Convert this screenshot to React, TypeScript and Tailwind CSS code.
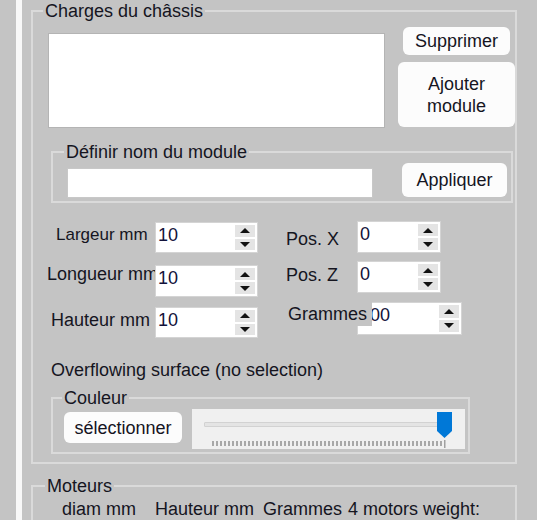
import React from "react";

function Tri({ up }: { up: boolean }) {
  return up ? (
    <div className="w-0 h-0 border-x-[5px] border-x-transparent border-b-[5px] border-b-[#111]" />
  ) : (
    <div className="w-0 h-0 border-x-[5px] border-x-transparent border-t-[5px] border-t-[#111]" />
  );
}

function NumBox({ value, className }: { value: string; className: string }) {
  return (
    <div className={`flex bg-white border border-[#d4d4d4] ${className}`}>
      <div className="flex-1 pl-[2px] pt-[1px] leading-[22px] text-[#12123a] overflow-hidden whitespace-nowrap">
        {value}
      </div>
      <div className="w-[24px] flex flex-col gap-[2px] p-[2px] bg-white">
        <div className="flex-1 bg-[#e4e4e4] flex items-center justify-center">
          <Tri up />
        </div>
        <div className="flex-1 bg-[#e4e4e4] flex items-center justify-center">
          <Tri up={false} />
        </div>
      </div>
    </div>
  );
}

function Btn({ children, className }: { children: React.ReactNode; className: string }) {
  return (
    <div
      className={`bg-[#fcfcfc] rounded-[6px] flex items-center justify-center text-center leading-[22px] ${className}`}
    >
      {children}
    </div>
  );
}

export default function App() {
  const ticks: number[] = [];
  for (let x = 0; x < 232; x += 4) ticks.push(x);
  return (
    <div className="w-[537px] h-[520px] overflow-hidden bg-[#c4c4c4] flex text-[18px] text-[#15151f] font-['Liberation_Sans',Arial,sans-serif]">
      <div className="w-[16px] shrink-0" />
      <div className="w-[6px] shrink-0 bg-[#f8f8f8]" />
      <div className="pl-[9px] flex flex-col">
        {/* Charges du châssis */}
        <fieldset className="w-[486px] border-2 border-[#dadada] pt-[5px] pb-[8px]">
          <legend className="ml-[10px] px-[2px] leading-[22px]">Charges du châssis</legend>
          <div className="flex items-start ml-[15px]">
            <div className="mt-[6px] w-[337px] h-[95px] bg-white border border-[#b4b4b4]" />
            <div className="ml-[13px] w-[117px] flex flex-col items-center gap-[7px]">
              <Btn className="w-[107px] h-[28px]">Supprimer</Btn>
              <Btn className="w-[117px] h-[65px]">
                Ajouter
                <br />
                module
              </Btn>
            </div>
          </div>

          {/* Définir nom du module */}
          <fieldset className="mt-[13px] ml-[18px] w-[462px] border-2 border-[#dadada] pb-[3px]">
            <legend className="ml-[11px] px-[2px] leading-[22px]">Définir nom du module</legend>
            <div className="flex items-start">
              <div className="ml-[14px] mt-[5px] w-[306px] h-[30px] bg-white border border-[#c8c8c8]" />
              <Btn className="ml-[29px] w-[105px] h-[34px]">Appliquer</Btn>
            </div>
          </fieldset>

          {/* numeric area */}
          <div className="mt-[18px] flex items-start">
            <div className="w-[225px] pt-[1px] flex flex-col">
              <div className="flex items-start h-[31px]">
                <div className="w-[122px] pl-[23px] mt-[2px] text-[17px] leading-[22px] whitespace-nowrap overflow-hidden">
                  Largeur mm
                </div>
                <NumBox value="10" className="w-[103px] h-[31px]" />
              </div>
              <div className="flex items-start h-[32px] mt-[12px]">
                <div className="w-[122px] pl-[14px] -mt-[2px] leading-[22px] whitespace-nowrap overflow-hidden">
                  Longueur mm
                </div>
                <NumBox value="10" className="w-[103px] h-[32px]" />
              </div>
              <div className="flex items-start h-[31px] mt-[10px]">
                <div className="w-[122px] pl-[18px] mt-[2px] leading-[22px] whitespace-nowrap overflow-hidden">
                  Hauteur mm
                </div>
                <NumBox value="10" className="w-[103px] h-[31px]" />
              </div>
            </div>
            <div className="ml-[26px] flex flex-col">
              <div className="flex items-start h-[32px]">
                <div className="w-[73px] pl-[2px] mt-[7px] leading-[22px] whitespace-nowrap">Pos. X</div>
                <NumBox value="0" className="w-[84px] h-[32px]" />
              </div>
              <div className="flex items-start h-[32px] mt-[8px]">
                <div className="w-[73px] pl-[2px] mt-[3px] leading-[22px] whitespace-nowrap">Pos. Z</div>
                <NumBox value="0" className="w-[84px] h-[32px]" />
              </div>
              <div className="relative mt-[9px] h-[33px]">
                <NumBox value="100" className="ml-[73px] w-[105px] h-[33px]" />
                <div className="absolute left-[3px] top-0 w-[85px] h-[24px] bg-[#c4c4c4] pl-[1px] pt-[1px] leading-[22px] whitespace-nowrap overflow-hidden">
                  Grammes
                </div>
              </div>
            </div>
          </div>

          <div className="mt-[21px] ml-[18px] leading-[22px] whitespace-nowrap">
            Overflowing surface (no selection)
          </div>

          {/* Couleur */}
          <fieldset className="mt-[6px] ml-[18px] w-[419px] border-2 border-[#dadada] pb-[3px]">
            <legend className="ml-[9px] px-[2px] leading-[22px]">Couleur</legend>
            <div className="flex items-start">
              <Btn className="ml-[11px] mt-[3px] w-[118px] h-[31px]">sélectionner</Btn>
              <div className="relative ml-[10px] w-[273px] h-[40px] bg-[#f0f0f0] pt-[13px] pl-[12px]">
                <div className="w-[248px] h-[5px] bg-[#e4e4e4] border border-[#d2d2d2] rounded-[1px]" />
                <svg className="block mt-[13px] ml-[8px]" width="236" height="8" viewBox="0 0 236 8">
                  {ticks.map((x) => (
                    <rect key={x} x={x} y={1} width={2} height={5} fill="#a8a8a8" />
                  ))}
                  <rect x={232} y={0} width={1.5} height={8} fill="#a0a0a0" />
                </svg>
                <svg className="absolute left-[245px] top-[3px]" width="15" height="26" viewBox="0 0 15 26">
                  <path d="M0 0 H15 V19 L7.5 26 L0 19 Z" fill="#0078d7" />
                </svg>
              </div>
            </div>
          </fieldset>
        </fieldset>

        {/* Moteurs */}
        <fieldset className="mt-[11px] w-[486px] border-2 border-[#dadada] pb-[20px]">
          <legend className="ml-[12px] px-[2px] leading-[22px]">Moteurs</legend>
          <div className="mt-[1px] flex leading-[22px] whitespace-nowrap">
            <span className="ml-[29px] w-[93px]">diam mm</span>
            <span className="w-[108px]">Hauteur mm</span>
            <span className="w-[85px]">Grammes</span>
            <span>4 motors weight:</span>
          </div>
        </fieldset>
      </div>
    </div>
  );
}
